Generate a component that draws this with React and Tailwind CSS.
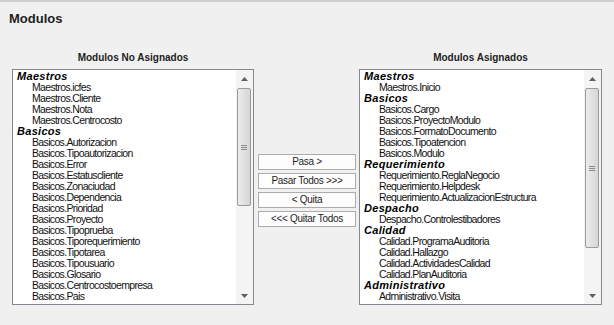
const noAsignados = [
  { group: 'Maestros', items: ['icfes', 'Cliente', 'Nota', 'Centrocosto'] },
  {
    group: 'Basicos',
    items: [
      'Autorizacion',
      'Tipoautorizacion',
      'Error',
      'Estatuscliente',
      'Zonaciudad',
      'Dependencia',
      'Prioridad',
      'Proyecto',
      'Tipoprueba',
      'Tiporequerimiento',
      'Tipotarea',
      'Tipousuario',
      'Glosario',
      'Centrocostoempresa',
      'Pais',
    ],
  },
];

const asignados = [
  { group: 'Maestros', items: ['Inicio'] },
  { group: 'Basicos', items: ['Cargo', 'ProyectoModulo', 'FormatoDocumento', 'Tipoatencion', 'Modulo'] },
  { group: 'Requerimiento', items: ['ReglaNegocio', 'Helpdesk', 'ActualizacionEstructura'] },
  { group: 'Despacho', items: ['Controlestibadores'] },
  { group: 'Calidad', items: ['ProgramaAuditoria', 'Hallazgo', 'ActividadesCalidad', 'PlanAuditoria'] },
  { group: 'Administrativo', items: ['Visita'] },
];

function Arrow({ down }) {
  return (
    <svg width="7" height="4" viewBox="0 0 7 4">
      <path d={down ? 'M0 0h7L3.5 4z' : 'M3.5 0L7 4H0z'} fill="#5f5f5f" />
    </svg>
  );
}

function ScrollBar({ thumbTop, thumbHeight }) {
  return (
    <div className="relative flex w-[17px] flex-col bg-[#f4f4f4]">
      <div className="flex h-[17px] items-center justify-center">
        <Arrow />
      </div>
      <div className="flex-1" />
      <div className="flex h-[17px] items-center justify-center">
        <Arrow down />
      </div>
      <div
        className="absolute left-[1px] right-[2px] flex items-center justify-center rounded-[2px] border border-[#9a9a9a] bg-gradient-to-r from-[#ececec] to-[#d6d6d6]"
        style={{ top: thumbTop, height: thumbHeight }}
      >
        <div className="flex flex-col gap-[1px]">
          <div className="h-px w-[6px] bg-[#8a8a8a]" />
          <div className="h-px w-[6px] bg-[#8a8a8a]" />
          <div className="h-px w-[6px] bg-[#8a8a8a]" />
        </div>
      </div>
    </div>
  );
}

function ListBox({ title, data, thumbTop, thumbHeight, width }) {
  return (
    <div className={width}>
      <div className="h-[14px] text-center text-[10px] font-bold leading-[14px] text-[#1e1e1e]">{title}</div>
      <div className="mt-[4px] flex h-[236px] border border-[#828790] bg-white">
        <div className="flex-1 overflow-hidden pl-[4px] pt-[1px] text-[10.5px] leading-[11px] tracking-[-0.65px] text-[#111]">
          {data.map((g) => (
            <div key={g.group}>
              <div className="h-[11px] text-[11px] font-bold italic leading-[11px] tracking-[0.3px] text-black">{g.group}</div>
              {g.items.map((it) => (
                <div key={it} className="h-[11px] pl-[15px]">
                  {g.group}.{it}
                </div>
              ))}
            </div>
          ))}
        </div>
        <ScrollBar thumbTop={thumbTop} thumbHeight={thumbHeight} />
      </div>
    </div>
  );
}

function Btn({ children }) {
  return (
    <button
      type="button"
      className="h-[16px] w-full border border-[#acacac] bg-[#fdfdfd] text-center text-[10px] leading-[14px] tracking-[-0.3px] text-[#1e1e1e]"
    >
      {children}
    </button>
  );
}

export default function App() {
  return (
    <div className="h-[325px] w-[614px] overflow-hidden border-t-2 border-[#cfcfcf] bg-[#f0f0f0] font-['Liberation_Sans',Arial,sans-serif]">
      <div className="pl-[9px] pt-[10px] text-[13px] font-bold leading-[14px] text-[#1e1e1e]">Modulos</div>
      <div className="mt-[25px] flex pl-[12px]">
        <ListBox title="Modulos No Asignados" data={noAsignados} thumbTop={18} thumbHeight={118} width="w-[242px]" />
        <div className="ml-[4px] mr-[3px] flex w-[98px] flex-col gap-[3px] pt-[103px]">
          <Btn>Pasa &gt;</Btn>
          <Btn>Pasar Todos &gt;&gt;&gt;</Btn>
          <Btn>&lt; Quita</Btn>
          <Btn>&lt;&lt;&lt; Quitar Todos</Btn>
        </div>
        <ListBox title="Modulos Asignados" data={asignados} thumbTop={18} thumbHeight={160} width="w-[243px]" />
      </div>
    </div>
  );
}
